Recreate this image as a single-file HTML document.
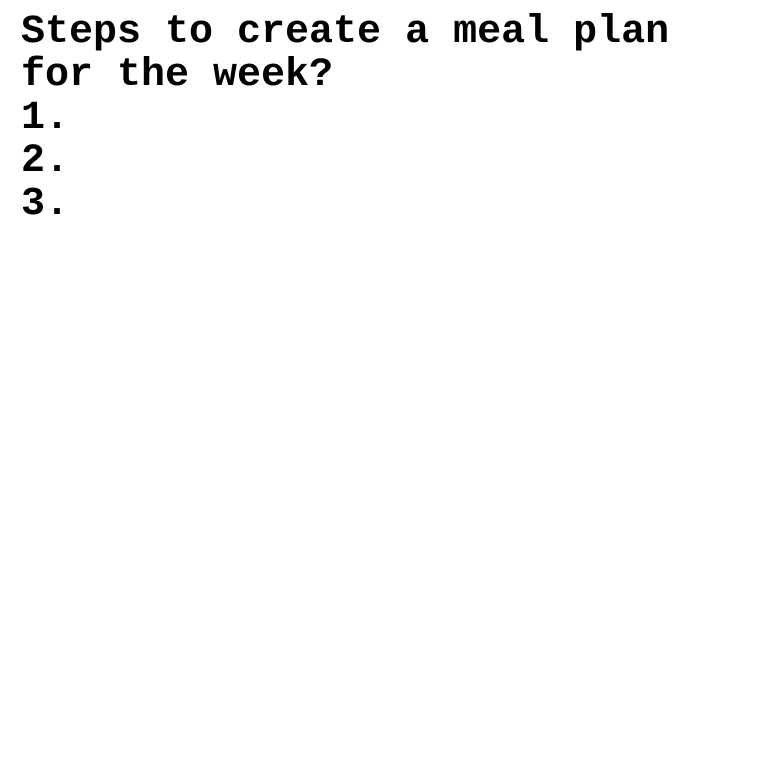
<!DOCTYPE html>
<html><head><style>
html,body{margin:0;padding:0;background:#fff;width:760px;height:760px;overflow:hidden}
pre{margin:0;position:absolute;left:21px;top:11px;font-family:"Courier New","Nimbus Mono PS","Nimbus Mono L","FreeMono",Courier,"Liberation Mono",monospace;font-weight:bold;font-size:40px;line-height:43px;color:#000}
</style></head><body>
<pre>Steps to create a meal plan
for the week?
1.
2.
3.</pre>
</body></html>
